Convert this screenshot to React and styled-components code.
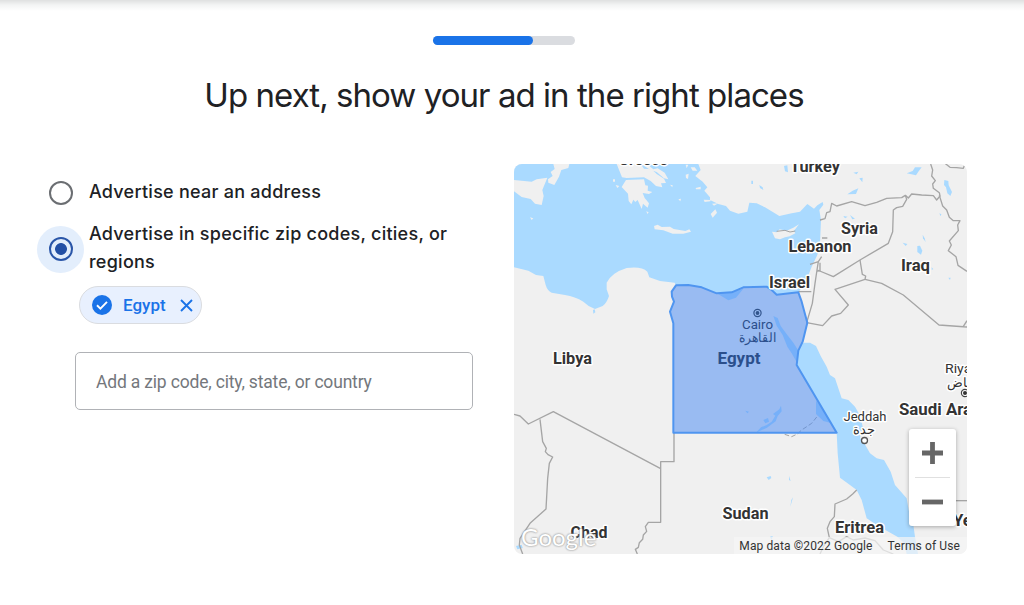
import React, { useState } from 'react'
import styled, { createGlobalStyle } from 'styled-components'

const mapLabels = [
    { text: 'Turkey', x: 815, y: 172, w: 50 },
    { text: 'Syria', x: 859.5, y: 234, w: 37 },
    { text: 'Lebanon', x: 820, y: 252, w: 63 },
    { text: 'Iraq', x: 915.5, y: 271, w: 29 },
    { text: 'Israel', x: 789.5, y: 288, w: 41 },
    { text: 'Libya', x: 572.5, y: 364, w: 39 },
    { text: 'Saudi Arabia', x: 947, y: 415, w: 96 },
    { text: 'Sudan', x: 745.5, y: 519, w: 46 },
    { text: 'Chad', x: 589, y: 538, w: 37 },
    { text: 'Eritrea', x: 859.5, y: 533, w: 49 },
    { text: 'Yemen', x: 979, y: 526, w: 52 },
]

const options = [
    { id: 'address', label: 'Advertise near an address' },
    { id: 'regions', label: 'Advertise in specific zip codes, cities, or regions' },
]

const borders = [
    'M12 763L30 768L55 792L130 755L452 926',
    'M90 778L98 845L109 865L106 875L114 884L128 891L118 910L113 955L108 1047L60 1090L30 1135L28 1155L38 1182',
    'M492 818V905H452V1087H415L406 1100L410 1114L400 1125L398 1138L388 1148L385 1162L376 1168L382 1182',
    'M1040 990L1028 1002L1010 1017L975 1032L973 1070L960 1085L952 1105L958 1133L940 1160L930 1182',
    'M958 1133L985 1145L1010 1130L1030 1140L1065 1134L1095 1142L1120 1170L1150 1182',
    'M1330 1022H1371',
    'M890 488L938 497L965 468L992 460L1015 435L975 388L1065 358L1067 348L1057 343L1050 300',
    'M922 330L970 350L1050 300L1135 250L1148 215L1150 150L1160 143L1178 139L1190 118L1186 106',
    'M930 180L945 176L950 158L960 155L965 130L980 138L1025 125L1065 137L1100 127L1130 115L1175 113L1186 106L1195 114L1205 102L1235 105L1270 107L1280 120L1290 108L1288 98L1270 85L1268 72L1276 62L1265 48L1268 30L1262 12',
    'M1288 106L1298 138L1310 150L1318 172L1330 182L1350 182L1343 195L1345 212L1318 243L1324 255L1315 272L1338 290L1344 316L1371 334',
    'M1065 358L1115 370L1180 405L1287 495L1371 501M1360 499L1371 482',
    'M936 234H952M935 290L925 305L921 330L915 370L907 430L890 488M925 305L900 313M930 308V332L920 334M865 395H904',
    'M1305 10L1320 22L1340 23L1360 25L1364 14',
]

const lakes = [
    'M1190 40L1208 33L1215 22L1235 22L1225 35L1218 46Z',
    'M1303 60L1315 63L1316 76L1326 96L1321 108L1312 100L1308 82L1302 75Z',
    'M1222 258L1230 257L1237 272L1233 284L1222 276Z',
    'M1178 248L1192 252L1187 258Z',
    'M1238 224L1244 235L1247 246L1239 235Z',
    'M822 18L832 16L834 37L825 34ZM1030 38L1045 35L1040 43ZM1048 55L1058 53L1057 67ZM1028 92L1045 85L1038 102L1012 103ZM724 62H729V72H724ZM748 75L758 82L760 90L750 84Z',
    'M1000 168L1013 170L1005 175ZM1020 165L1035 176L1027 178ZM1288 160L1294 163L1292 169ZM1315 353H1322L1320 360ZM1265 322L1270 328L1265 329Z',
    'M770 952L782 948L784 954L776 960ZM837 948L842 963L837 960ZM849 1012L844 1030L841 1040L844 1020ZM780 1130L788 1128L785 1140Z',
    'M18 1158L35 1154L38 1164L22 1168Z',
]

const MapDrawing = () => (
    <svg width="453" height="390" viewBox="12 12 1359 1170">
        <rect x="12" y="12" width="1359" height="1170" fill="#f0f0f0" />
        <g fill="#aadaff">
            <path d="M12 12H565L572 30L556 48L578 65L592 82L583 92L600 112L600 120L625 132L648 138L660 152L685 161L712 155L718 128L740 130L765 142L808 168L845 160L870 155L892 132L912 146L922 136L938 126L940 134L928 150L933 180L930 250L922 285L905 320L885 372L865 397L800 403L785 390L770 380L720 378L700 382L665 397L618 398L575 382L535 375L498 376L494 368L450 363L418 352L412 335Q395 318 350 324Q305 338 290 368L290 388L297 408Q290 430 278 438L255 447Q235 440 220 425Q195 410 165 405L125 398Q112 392 107 375L100 348L78 345L55 332L12 322Z" />
            <path d="M878 548L900 548L918 558L932 588L950 620L960 645L975 655L985 685L995 715L1015 720L1035 740L1052 770L1058 800L1050 835L1062 848L1080 880L1100 895L1122 900L1142 935L1155 975L1190 1015L1196 1050L1210 1095L1215 1130L1224 1182H1190L1183 1150L1162 1130L1105 1098L1070 1075L1055 1020L1040 990L1020 975L990 953L983 880L980 818L860 615L862 572Z" />
            {lakes.map((d) => <path key={d} d={d} />)}
            <path d="M249 450L254 448L256 457L250 461Z" />
        </g>

        {/* islands and the greek / italian coast */}
        <g fill="#f0f0f0">
            <path d="M12 60L65 65L80 58L112 53L97 90L101 108L95 135L75 131L62 117L35 111L12 94Z" />
            <path d="M130 12H178L175 24L154 30L147 50L133 75L115 68L114 58L128 48L122 36L134 27Z" />
            <path d="M320 12H392L402 26L425 28L440 42L462 56L468 69L453 70L457 82L438 78L422 63L402 52L350 54L336 52ZM348 60L402 58L406 76L414 77L413 92L427 96L417 102L398 99L404 114L417 130L413 143L399 131L395 147L383 120L376 126L370 119L364 133L356 123L354 101L335 81Z" />
            <path d="M432 198L443 194L455 201L480 200L491 207L526 213L538 208L543 215L520 221L488 221L460 211L434 208Z" />
            <path d="M602 162L616 148L621 158L608 173Z" />
            <path d="M786 215L800 217L809 208L830 212L850 203L867 193L852 212L856 220L839 229L825 232L810 238L795 235Z" />
            <path d="M393 12H411L430 28L443 25L464 38L475 58L462 55L440 36L420 29ZM309 58H315V65H309ZM317 75L328 78L322 84ZM409 154L416 157L412 162ZM505 118L513 116L511 124ZM60 172L70 175L65 180ZM527 14H535L530 25ZM542 22H554L562 32L548 32ZM527 44L536 41L534 57L528 54ZM557 84L572 80L572 88L558 88ZM581 119L602 120L601 124L584 126ZM606 131L625 130L612 137ZM480 74L488 76L487 82Z" />
        </g>
        <g fill="none" stroke="#a5a5a5" strokeWidth="4" strokeLinejoin="round">
            {borders.map((d) => <path key={d} d={d} />)}
            <path d="M800 214L825 211L840 216L856 213" strokeWidth="3" />
            <path d="M824 823L845 830L862 822L875 810L905 790L925 765" strokeDasharray="14 7" strokeWidth="3" />
        </g>

        {/* nile and lake nasser, tinted by the region above them */}
        <g fill="#aadaff">
            <path d="M618 398L665 397L700 386L678 413L655 421Z" />
            <path d="M790 468L803 474L812 498L832 525L850 548L864 570L862 610L845 580L832 560L818 525L800 497Z" />
            <path d="M738 818L753 802L770 795L785 785L796 767L789 762L808 748L813 737L815 754L803 768L797 784L771 803Z" />
            <path d="M918 722L935 740L960 788L940 783L918 762Z" />
            <path d="M706 752L717 755L712 760ZM760 780L774 774L777 785L766 790Z" />
        </g>
        <path
            d="M485 395L498 376L535 375L575 382L620 400L665 397L700 382L770 380L785 390L800 404L865 397L875 425L892 488L878 545L865 572L860 615L980 818H490V490L480 455L492 425L486 410Z"
            fill="rgba(66,133,244,0.5)"
            stroke="#4f95f0"
            strokeWidth="6"
            strokeLinejoin="round"
        />

        <g transform="scale(3) translate(-510 -160)" textAnchor="middle" fontFamily="Roboto, sans-serif">
            <Label x="643" y="164.500" textLength="49" lengthAdjust="spacingAndGlyphs">Greece</Label>
            {mapLabels.map(({ text, x, y, w }) => (
                <Label key={text} x={x} y={y} textLength={w} lengthAdjust="spacingAndGlyphs">{text}</Label>
            ))}
            <Label $inRegion x="739" y="363.500" textLength="43" lengthAdjust="spacingAndGlyphs">Egypt</Label>
            <Label $small $inRegion x="757.500" y="329" textLength="31" lengthAdjust="spacingAndGlyphs">Cairo</Label>
            <Label $small $inRegion x="757.500" y="342" textLength="38" lengthAdjust="spacingAndGlyphs">القاهرة</Label>
            <Label $small x="865" y="421" textLength="43" lengthAdjust="spacingAndGlyphs">Jeddah</Label>
            <Label $small x="864" y="433.500">جدة</Label>
            <Label $small x="966" y="373" textLength="42" lengthAdjust="spacingAndGlyphs">Riyadh</Label>
            <Label $small x="966" y="387">الرياض</Label>
            <circle cx="864.500" cy="440.500" r="3" fill="#fff" stroke="#555" strokeWidth="1.300" />
            <circle cx="757.500" cy="313" r="3.600" fill="none" stroke="#31548c" strokeWidth="1.200" />
            <circle cx="757.500" cy="313" r="1.900" fill="#31548c" />
            <circle cx="965" cy="393" r="3.600" fill="#fff" stroke="#444" strokeWidth="1.200" />
            <circle cx="965" cy="393" r="2" fill="#333" />
        </g>
    </svg>
)

const App = () => {
    const [selected, setSelected] = useState('regions')

    return (
        <>
            <GlobalStyle />
            <Page>
                <Progress><ProgressBar /></Progress>
                <Title>Up next, show your ad in the right places</Title>
                <Content>
                    <Form>
                        {options.map(({ id, label }) => (
                            <Option key={id} onClick={() => setSelected(id)}>
                                <Halo $checked={selected === id}>
                                    <Radio $checked={selected === id} />
                                </Halo>
                                <OptionText>{label}</OptionText>
                            </Option>
                        ))}
                        <Chip>
                            <svg width="20" height="20" viewBox="0 0 20 20">
                                <circle cx="10" cy="10" r="10" fill="#1a73e8" />
                                <path d="M5 10.300L8.400 13.600L15 6.900" fill="none" stroke="#fff" strokeWidth="1.900" />
                            </svg>
                            <ChipText>Egypt</ChipText>
                            <svg width="13" height="13" viewBox="0 0 13 13">
                                <path d="M1 1L12 12M12 1L1 12" stroke="#1a73e8" strokeWidth="1.900" />
                            </svg>
                        </Chip>
                        <Field placeholder="Add a zip code, city, state, or country" />
                    </Form>
                    <MapBox>
                        <MapDrawing />
                        <Logo>Google</Logo>
                        <Zoom>
                            <ZoomButton aria-label="Zoom in">
                                <svg width="21" height="22" viewBox="0 0 21 22"><path d="M10.500 0V22M0 11H21" stroke="#666" strokeWidth="4.800" /></svg>
                            </ZoomButton>
                            <ZoomLine />
                            <ZoomButton aria-label="Zoom out">
                                <svg width="21" height="22" viewBox="0 0 21 22"><path d="M0 11H21" stroke="#666" strokeWidth="4.800" /></svg>
                            </ZoomButton>
                        </Zoom>
                        <Credits>
                            <span>Map data ©2022 Google</span>
                            <span>Terms of Use</span>
                        </Credits>
                    </MapBox>
                </Content>
            </Page>
        </>
    )
}

const GlobalStyle = createGlobalStyle`
* {
  box-sizing: border-box;
}
body {
  margin: 0;
  background: #fff;
  overflow: hidden;
}
`

const Page = styled.div`
  height: 605px;
  padding-top: 36px;
  display: flex;
  flex-direction: column;
  background: linear-gradient(#dfe0e0, #f3f4f4 5px, #fff 11px);
`

const Progress = styled.div`
  width: 142px;
  height: 9px;
  margin-left: 433px;
  border-radius: 5px;
  background: #dadce0;
`

const ProgressBar = styled.div`
  width: 100px;
  height: 9px;
  border-radius: 5px;
  background: #1a73e8;
`

const Title = styled.h1`
  width: 1008px;
  margin: 28px 0 0;
  text-align: center;
  white-space: nowrap;
  font: 400 33px/44px Inter, sans-serif;
  letter-spacing: -0.95px;
  color: #202124;
`

const Content = styled.div`
  display: flex;
  margin-top: 47px;
`

const Form = styled.div`
  width: 514px;
  padding: 14px 0 0 37px;
  display: flex;
  flex-direction: column;
`

const Option = styled.div`
  display: flex;
  align-items: center;
  gap: 5px;
  height: 28px;
  margin-bottom: 14px;
  cursor: pointer;
  & + & {
    height: 56px;
    margin-bottom: 10px;
  }
`

const Halo = styled.div`
  width: 47px;
  height: 47px;
  margin: -8px 0 -10px;
  padding-left: 1px;
  display: grid;
  place-items: center;
  border-radius: 50%;
  background: ${({ $checked }) => ($checked ? '#e3eefc' : 'transparent')};
`

const Radio = styled.div`
  width: 24px;
  height: 24px;
  border-radius: 50%;
  border: 2px solid ${({ $checked }) => ($checked ? '#2a56a8' : '#6b6e72')};
  background: ${({ $checked }) => ($checked ? 'radial-gradient(circle, #2350a5 5.500px, transparent 6.300px)' : 'transparent')};
`

const OptionText = styled.div`
  width: 385px;
  font: 500 18px/28px Inter, sans-serif;
  letter-spacing: 0.25px;
  color: #202124;
`

const Chip = styled.div`
  width: 123px;
  height: 38px;
  margin-left: 42px;
  display: flex;
  align-items: center;
  padding-left: 12px;
  border: 1px solid #dadce0;
  border-radius: 19px;
  background: #e8f0fe;
`

const ChipText = styled.span`
  width: 45px;
  margin: 0 12px 0 11px;
  font: 500 17px/24px Roboto, sans-serif;
  color: #1a73e8;
`

const Field = styled.input`
  width: 398px;
  height: 58px;
  margin: 28px 0 0 38px;
  padding: 2px 20px 0;
  border: 1.500px solid #b0b2b6;
  border-radius: 5px;
  outline: none;
  font: 400 17.500px Roboto, sans-serif;
  letter-spacing: -0.18px;
  color: #202124;
  &::placeholder {
    color: #74777c;
    opacity: 1;
  }
`

const MapBox = styled.div`
  position: relative;
  width: 453px;
  height: 390px;
  overflow: hidden;
  border-radius: 8px;
  svg {
    display: block;
  }
`

const Label = styled.text`
  font-size: ${({ $small }) => ($small ? 13 : 16.5)}px;
  font-weight: ${({ $small }) => ($small ? 400 : 700)};
  fill: ${({ $inRegion }) => ($inRegion ? '#2b4f8c' : '#333')};
  stroke: ${({ $inRegion }) => ($inRegion ? 'none' : '#fff')};
  stroke-width: 3px;
  stroke-linejoin: round;
  paint-order: stroke;
`

const Logo = styled.div`
  position: absolute;
  left: 7px;
  bottom: 4px;
  font: 400 24px/26px Lato, sans-serif;
  color: #fff;
  text-shadow: 0 0 2px #999, 0 0 2px #aaa;
`

const Zoom = styled.div`
  position: absolute;
  right: 11px;
  bottom: 28px;
  width: 47px;
  height: 97px;
  display: flex;
  flex-direction: column;
  align-items: center;
  border-radius: 3px;
  background: #fff;
  box-shadow: 0 1px 4px rgba(0, 0, 0, 0.3);
`

const ZoomButton = styled.button`
  flex: 1;
  width: 100%;
  display: grid;
  place-items: center;
  padding: 0 1px 0 0;
  border: 0;
  background: none;
`

const ZoomLine = styled.div`
  width: 35px;
  height: 1px;
  background: #e0e0e0;
`

const Credits = styled.div`
  position: absolute;
  right: 0;
  bottom: 0;
  height: 17px;
  display: flex;
  gap: 15px;
  padding: 0 7px 0 5px;
  background: rgba(245, 245, 245, 0.7);
  font: 400 12px/18px Roboto, sans-serif;
  letter-spacing: 0.12px;
  white-space: nowrap;
  color: #333;
`

export default App
